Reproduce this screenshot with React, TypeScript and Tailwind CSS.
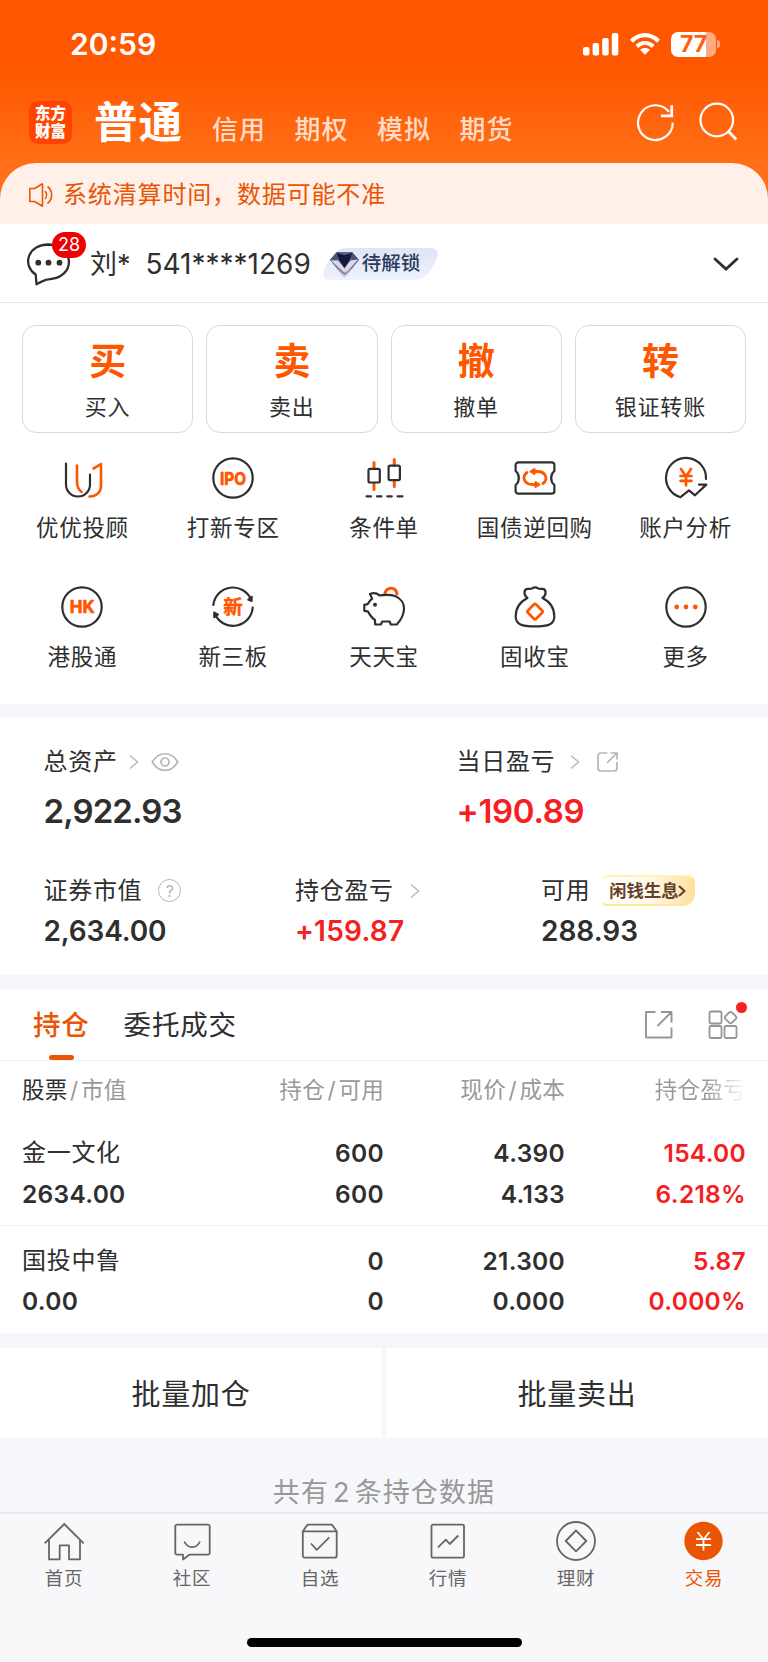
import type { ReactNode } from 'react';
import clsx from 'clsx';

const DARK = '#2f2f2f';
const ORANGE = '#ff5600';

const headerTabs = ['信用', '期权', '模拟', '期货'];

const actions = [
  { mark: '买', label: '买入' },
  { mark: '卖', label: '卖出' },
  { mark: '撤', label: '撤单' },
  { mark: '转', label: '银证转账' },
];

const holdings = [
  { name: '金一文化', value: '2634.00', qty: '600', usable: '600', price: '4.390', cost: '4.133', profit: '154.00', rate: '6.218%' },
  { name: '国投中鲁', value: '0.00', qty: '0', usable: '0', price: '21.300', cost: '0.000', profit: '5.87', rate: '0.000%' },
];

function ServiceIcon({ children }: { children: ReactNode }) {
  return (
    <svg
      className="h-11 w-11 overflow-visible"
      viewBox="0 0 44 44"
      fill="none"
      stroke={DARK}
      strokeWidth="2.2"
      strokeLinecap="round"
      strokeLinejoin="round"
    >
      {children}
    </svg>
  );
}

const services: { label: string; icon: ReactNode }[] = [
  {
    label: '优优投顾',
    icon: (
      <>
        <path d="M6 7.5V28.5a12 12 0 0 0 24 0V18.5" />
        <path d="M17 9.5V26c0 4.500 1.200 7.500 4.500 10" stroke={ORANGE} strokeWidth="2.600" />
        <path d="M33.500 12.500 41 8.200V29.500C41 36.500 36 40.500 29.500 40.500" stroke={ORANGE} strokeWidth="2.600" />
      </>
    ),
  },
  {
    label: '打新专区',
    icon: (
      <>
        <circle cx="22" cy="22" r="19.7" />
        <text x="22" y="28.500" textAnchor="middle" fontSize="17.500" fontWeight="700" fill={ORANGE} stroke={ORANGE} strokeWidth="0.7" textLength="26" lengthAdjust="spacingAndGlyphs" fontFamily="Inter, sans-serif">
          IPO
        </text>
      </>
    ),
  },
  {
    label: '条件单',
    icon: (
      <>
        <path d="M12 6.500v6M12 27.500v6M32.300 3.500v6M32.300 24.500v6" stroke={ORANGE} strokeWidth="3" />
        <rect x="6.500" y="12.800" width="11.300" height="13.700" rx="1.500" />
        <rect x="26.600" y="9.600" width="11.300" height="14.500" rx="1.500" />
        <path d="M4.500 40.300h4.500M15 40.300h4.500M25.300 40.300h4.500M35.500 40.300h5" />
      </>
    ),
  },
  {
    label: '国债逆回购',
    icon: (
      <>
        <path d="M5.300 6.400H38.700a2.700 2.700 0 0 1 2.700 2.700V15c-4.300 3.300-4.300 10.700 0 14v6a2.700 2.700 0 0 1-2.700 2.700H5.300A2.700 2.700 0 0 1 2.600 35v-6c4.300-3.300 4.300-10.700 0-14V9.100a2.700 2.700 0 0 1 2.700-2.700Z" />
        <g stroke={ORANGE} strokeWidth="2.800">
          <path d="M21 15.500h3.500c8.500 0 11 8 5.500 12" />
          <path d="M23 28.500h-3.500c-8.500 0-11-8-5.500-12" />
          <path d="m21.500 13-4 2.500 4 2.500ZM22.500 26l4 2.500-4 2.500Z" fill={ORANGE} strokeWidth="2" />
        </g>
      </>
    ),
  },
  {
    label: '账户分析',
    icon: (
      <>
        <path d="M42 23A20 20 0 1 0 16.500 41.200L25 34.300 31 39.300 42.300 28.600H35" />
        <path d="m17 13 5 7.500 5-7.500M22 20.500V29.500M16.500 20h11M16.500 24.800h11" stroke={ORANGE} strokeWidth="2.700" />
      </>
    ),
  },
  {
    label: '港股通',
    icon: (
      <>
        <circle cx="22" cy="22" r="19.7" />
        <text x="22.300" y="28.300" textAnchor="middle" fontSize="17.500" fontWeight="700" fill={ORANGE} stroke={ORANGE} strokeWidth="0.7" textLength="25" lengthAdjust="spacingAndGlyphs" fontFamily="Inter, sans-serif">
          HK
        </text>
      </>
    ),
  },
  {
    label: '新三板',
    icon: (
      <>
        <path d="M2.300 20A19.700 19.700 0 0 1 40 14.500M41.700 22.500A19.700 19.700 0 0 1 4.200 29.500" />
        <path d="m41 11.500-.2 4.800-3.800-1.600ZM3 32.500V27.300l4.200 2.200Z" fill={DARK} strokeWidth="1.600" />
        <text x="22" y="29" textAnchor="middle" fontSize="19.500" fontWeight="700" fill={ORANGE} stroke={ORANGE} strokeWidth="0.4" fontFamily="'Noto Sans CJK SC', sans-serif">
          新
        </text>
      </>
    ),
  },
  {
    label: '天天宝',
    icon: (
      <>
        <path d="M22.800 8.500c2.200-7.300 11-7 12.200.5" stroke={ORANGE} strokeWidth="2.900" />
        <path d="M8 9c3-1.200 7-.7 9.500 1.300 5-.6 11-.8 15.500.7 6.500 2.500 9.300 8 9 13.300-.3 5.700-3 10.700-7.200 15.200h-6l-1.200-3h-7.300l-1.500 3h-5.600l-.3-4.600C9.500 33 8 30 5.800 26.300l-3.500-.5V19.800l3.300-.6C7 17 8.200 15 10.200 13.600Z" />
        <circle cx="13" cy="19.800" r="1.300" fill={DARK} strokeWidth="1.400" />
      </>
    ),
  },
  {
    label: '固收宝',
    icon: (
      <>
        <path d="M14.500 13c-4.200-3.200-4-9.200.5-9.200 2 0 2.600.3 3.800-.2 2.300-1.500 4.400-1.500 6.500 0 1.200.5 1.900.2 3.800.2 4.500 0 4.700 6 .4 9.200C36.500 16.500 41.300 23 41.300 31.500c0 8-6.300 9.800-19.300 9.800S2.700 39.500 2.700 31.500C2.700 23 7.500 16.500 14.500 13Z" />
        <rect x="16.200" y="20.800" width="11.600" height="11.600" rx="1.600" transform="rotate(45 22 26.600)" stroke={ORANGE} strokeWidth="2.700" />
      </>
    ),
  },
  {
    label: '更多',
    icon: (
      <>
        <circle cx="22" cy="22" r="19.7" />
        <g fill={ORANGE} stroke="none">
          <circle cx="12.700" cy="22" r="2.400" />
          <circle cx="22" cy="22" r="2.400" />
          <circle cx="31.300" cy="22" r="2.400" />
        </g>
      </>
    ),
  },
];

const navItems: { label: string; active?: boolean; icon: ReactNode }[] = [
  { label: '首页', icon: <path d="M1.700 23.300 21.300 4l19.400 19.300M6 19.500V39.300H16.700V25.300H26V39.300H37V19.500" /> },
  {
    label: '社区',
    icon: (
      <>
        <path d="M6 4.700H37a1.700 1.700 0 0 1 1.700 1.700V33a1.700 1.700 0 0 1-1.700 1.700H18.300L12 39.500V34.700H6A1.700 1.700 0 0 1 4.300 33V6.400A1.700 1.700 0 0 1 6 4.700Z" />
        <path d="M13.300 21.500c3.200 7.400 12.500 7.400 15.700 0" />
      </>
    ),
  },
  {
    label: '自选',
    icon: (
      <>
        <path d="M8.500 4.700H33L37.700 11.300V35.500a2.200 2.200 0 0 1-2.200 2.200H6a2.200 2.200 0 0 1-2.200-2.200V11.300ZM3.800 11.300H37.700" />
        <path d="m12 23.500 5.800 6.300L30.300 17.300" />
      </>
    ),
  },
  {
    label: '行情',
    icon: (
      <>
        <rect x="4.500" y="4.700" width="32.500" height="33" rx="1.500" />
        <path d="m11 27.300 7.800-7.600 3.900 4.300 8.600-8.500" />
      </>
    ),
  },
  {
    label: '理财',
    icon: (
      <>
        <circle cx="21" cy="21" r="19" />
        <path d="M21 10.500 31.300 21 21 31.300 10.700 21Z" />
      </>
    ),
  },
  {
    label: '交易',
    active: true,
    icon: (
      <>
        <circle cx="20.500" cy="21" r="19.200" fill="#ea5504" stroke="none" />
        <path d="m14.500 12 6 7.500 6-7.500M20.500 19.500V30.500M13 19.200h15M13 25h15" stroke="#fff" />
      </>
    ),
  },
];

function StatusBar() {
  return (
    <div className="flex h-[87px] items-center justify-between pl-[70px] pr-12 pt-px">
      <span className="text-[30px] font-semibold text-white">20:59</span>
      <div className="flex items-center gap-2.5 text-white">
        <svg className="h-6 w-9" viewBox="0 0 36 24" fill="currentColor">
          <rect x="0" y="15" width="6.500" height="8.500" rx="2" />
          <rect x="9.600" y="11" width="6.500" height="12.500" rx="2" />
          <rect x="19.200" y="6" width="6.500" height="17.500" rx="2" />
          <rect x="28.800" y="1" width="6.500" height="22.500" rx="2" />
        </svg>
        <svg className="h-6 w-8" viewBox="0 0 32 24" fill="none" stroke="currentColor" strokeWidth="4.200">
          <path d="M2.500 9.200c8-8 19-8 27 0M7.800 14.500c5-4.700 11.400-4.700 16.400 0" />
          <path d="M16 22.700 11 17.700c3-2.400 7-2.400 10 0Z" fill="currentColor" stroke="none" />
        </svg>
        <div className="flex items-center gap-px">
          <div className="flex h-[25px] w-[45px] items-center justify-center rounded-[7px] bg-[linear-gradient(90deg,#fff_78%,#ffab80_78%)] text-[23px] font-bold leading-none text-[#ff6010]">
            77
          </div>
          <div className="h-2 w-[3px] rounded-r-full bg-[#ffab80]" />
        </div>
      </div>
    </div>
  );
}

function AppHeader() {
  return (
    <div className="flex h-[76px] items-end pl-[29px] pr-[31px]">
      <div className="mb-[19px] flex h-[43px] w-[43px] flex-col items-center justify-center rounded-[9px] bg-[#ff4400] text-[15.5px] font-black leading-[18px] text-white">
        <span>东方</span>
        <span>财富</span>
      </div>
      <span className="ml-[22px] mb-[18px] text-[43.500px] font-bold leading-[46px] tracking-[1px] text-white">普通</span>
      <div className="mb-[19px] ml-[29px] flex gap-[28.500px] text-[26px] font-medium leading-7 tracking-[1px] text-[#ffdcc8]">
        {headerTabs.map((tab) => (
          <span key={tab}>{tab}</span>
        ))}
      </div>
      <svg className="mb-[21px] ml-auto h-10 w-10" viewBox="0 0 40 40" fill="none" stroke="#fff" strokeWidth="2.200">
        <path d="M37.800 20.800A17.400 17.400 0 1 1 34 9.800" />
        <path d="M26 13.900H36.700V3.300" strokeWidth="2.800" />
      </svg>
      <svg className="mb-[21px] ml-[22px] h-10 w-10" viewBox="0 0 40 40" fill="none" stroke="#fff" strokeWidth="2.200">
        <circle cx="19.800" cy="18" r="16.300" />
        <path d="m31 29 8.300 8.500" strokeWidth="2.700" />
      </svg>
    </div>
  );
}

function AccountRow() {
  return (
    <div className="flex h-[79px] items-center border-b border-[#e9e9e9] pl-[26px] pr-[29px] pt-px text-[#2f2f2f]">
      <div className="relative h-[46px] w-[46px]">
        <svg className="h-[46px] w-[46px]" viewBox="0 0 46 46" fill="none" stroke={DARK} strokeWidth="2.300" strokeLinejoin="round">
          <path d="M10.500 43.200 9.700 33.500C-3.500 25 .5 4 22.500 3.500 49.500 4.500 50 37 22.500 38.300 19.500 38.300 10.500 43.200 10.500 43.200Z" />
          <g fill={DARK} stroke="none">
            <circle cx="12.300" cy="21.700" r="2.900" />
            <circle cx="22.500" cy="21.700" r="2.900" />
            <circle cx="33.500" cy="21.700" r="2.900" />
          </g>
        </svg>
        <span className="absolute left-[26px] -top-[9px] flex h-[26px] w-[34px] items-center justify-center rounded-full bg-[#ee0000] text-[18px] text-white">
          28
        </span>
      </div>
      <span className="ml-[18px] pt-px text-[27px] leading-none">刘*</span>
      <span className="ml-[15px] pt-px text-[28px] leading-none">541****1269</span>
      <div className="relative ml-[12px] flex h-8 w-[115px] items-center">
        <svg className="absolute inset-0 h-8 w-[115px]" viewBox="0 0 115 32">
          <defs>
            <linearGradient id="vip" x1="0" y1="0" x2="0" y2="1">
              <stop offset="0" stopColor="#dfe5f5" />
              <stop offset="1" stopColor="#eef2fe" />
            </linearGradient>
            <linearGradient id="gem" x1="0" y1="0" x2="0" y2="1">
              <stop offset="0" stopColor="#5d668c" />
              <stop offset="0.600" stopColor="#77739b" />
              <stop offset="1" stopColor="#d9dcea" />
            </linearGradient>
          </defs>
          <path d="M23 0h84c7 0 9 5 7 10-4 9-10 22-23 22H7c-6 0-8-5-6-10C5 12 12 0 23 0Z" fill="url(#vip)" />
          <path d="m7 12 7-8h15l7 8-14.500 18Z" fill="url(#gem)" />
          <path d="m7 12 7-8 3 2-3 6ZM36 12l-7-8-3 2 3 6Z" fill="#4a5274" />
          <path d="m14 5 7.500 2L29 5l-2 7-5.500 8-5.500-8Z" fill="#111a3c" />
          <path d="M8 12.500h7l6.500 8 6-8 7.500-1-13.500 15Z" fill="#dcdae2" />
          <path d="m8 12.500 13.500 14L25 22.500 21.500 25Z" fill="#67608a" />
        </svg>
        <span className="relative ml-[39px] text-[19.500px] font-medium leading-none text-[#2c3a5c]">待解锁</span>
      </div>
      <svg className="ml-auto h-4 w-[26px]" viewBox="0 0 26 16" fill="none" stroke={DARK} strokeWidth="2.800" strokeLinecap="round">
        <path d="m2 3 11 10L24 3" />
      </svg>
    </div>
  );
}

function Chevron() {
  return (
    <svg className="h-4 w-2.5" viewBox="0 0 10 16" fill="none" stroke="#bdbdbd" strokeWidth="1.600">
      <path d="m1 1.500 7.500 6.500L1 14.500" />
    </svg>
  );
}

function Assets() {
  return (
    <section className="h-[257px] bg-white pl-[43.500px] text-[#2f2f2f]">
      <div className="flex pt-7">
        <div className="w-[413px]">
          <div className="flex h-8 items-center text-[24px] tracking-[0.700px]">
            总资产
            <span className="ml-[11px] flex"><Chevron /></span>
            <svg className="ml-3 h-5 w-7" viewBox="0 0 28 20" fill="none" stroke="#b5b5b5" strokeWidth="1.700">
              <path d="M1.300 10C7.500-1 20.500-1 26.700 10 20.500 21 7.500 21 1.300 10Z" />
              <circle cx="14" cy="10" r="4" />
            </svg>
          </div>
          <div className="mt-[15px] text-[33px] font-semibold leading-9 tracking-[-0.900px]">2,922.93</div>
        </div>
        <div>
          <div className="flex h-8 items-center text-[24px] tracking-[0.700px]">
            当日盈亏
            <span className="ml-[15px] flex"><Chevron /></span>
            <svg className="ml-[17px] h-[22px] w-[22px]" viewBox="0 0 22 22" fill="none" stroke="#b5b5b5" strokeWidth="1.700">
              <path d="M10.500 2H4a3 3 0 0 0-3 3V17a3 3 0 0 0 3 3H17a3 3 0 0 0 3-3V11M13.500 2H20V8.500M20 2 10 12" />
            </svg>
          </div>
          <div className="mt-[15px] text-[33px] font-semibold leading-9 tracking-[-0.300px] text-[#f52020]">+190.89</div>
        </div>
      </div>
      <div className="mt-[45.500px] flex">
        <div className="w-[251.500px]">
          <div className="flex h-8 items-center text-[24px] tracking-[0.700px]">
            证券市值
            <span className="ml-4 flex h-[23px] w-[23px] items-center justify-center rounded-full border-[1.500px] border-[#b5b5b5] text-[16px] tracking-normal text-[#b5b5b5]">
              ?
            </span>
          </div>
          <div className="mt-2 text-[28px] font-semibold leading-8 tracking-[-0.150px]">2,634.00</div>
        </div>
        <div className="w-[246px]">
          <div className="flex h-8 items-center text-[24px] tracking-[0.700px]">
            持仓盈亏
            <span className="ml-4 flex"><Chevron /></span>
          </div>
          <div className="mt-2 text-[28px] font-semibold leading-8 tracking-[0.250px] text-[#f52020]">+159.87</div>
        </div>
        <div>
          <div className="flex h-8 items-center text-[24px] tracking-[0.700px]">
            可用
            <span className="ml-[10px] flex h-[31px] w-[95px] items-center justify-center rounded-[9px_7px_12px_7px] border-2 border-t-[#fff3b0] border-r-[#ffe09a] border-b-[#ffe79a] border-l-transparent bg-gradient-to-r from-white via-[#fffaee] to-[#ffdf9e] bg-origin-border text-[17.300px] font-bold tracking-normal text-[#65402a]">
              闲钱生息
              <svg className="h-3 w-2" viewBox="0 0 8 12" fill="none" stroke="#65402a" strokeWidth="2.200">
                <path d="m1 1 5.500 5L1 11" />
              </svg>
            </span>
          </div>
          <div className="mt-2 text-[28px] font-semibold leading-8">288.93</div>
        </div>
      </div>
    </section>
  );
}

function HoldingTabs() {
  return (
    <div className="flex h-[72px] items-center border-b border-[#f0f0f0] pl-[33px] pr-[30px] text-[27.500px] tracking-[0.800px]">
      <div className="relative flex h-full items-center pt-0.5 font-medium text-[#ea5504]">
        持仓
        <span className="absolute bottom-0 left-4 h-[5px] w-[25px] rounded-full bg-[#ea5504]" />
      </div>
      <span className="ml-[34px] pt-0.5 text-[#2f2f2f]">委托成交</span>
      <svg className="ml-auto h-[30px] w-[30px]" viewBox="0 0 30 30" fill="none" stroke="#969696" strokeWidth="1.900" strokeLinejoin="round">
        <path d="M11.500 2H2V27.500H27.500V17.500M17 2H27.500V12.500M27.500 2 13.500 16" />
      </svg>
      <div className="relative ml-[34px] h-[30px] w-[30px]">
        <svg className="h-[30px] w-[30px]" viewBox="0 0 30 30" fill="none" stroke="#969696" strokeWidth="1.800">
          <rect x="1.500" y="1.500" width="12" height="12" rx="1.500" />
          <rect x="1.500" y="16" width="12" height="12" rx="1.500" />
          <rect x="16.500" y="16" width="12" height="12" rx="1.500" />
          <rect x="18" y="3" width="9.200" height="9.200" rx="2" transform="rotate(45 22.600 7.600)" />
        </svg>
        <span className="absolute -right-[9px] -top-[8px] h-[11px] w-[11px] rounded-full bg-[#f52020]" />
      </div>
    </div>
  );
}

function Holdings() {
  return (
    <section className="bg-white px-[22px] text-[#2f2f2f]">
      <div className="grid h-[61px] grid-cols-[182px_180px_181px_181px] items-center pb-1 text-right text-[22.500px] tracking-[0.300px] text-[#999]">
        <div className="text-left">
          <span className="text-[#2f2f2f]">股票</span>
          <span className="mx-[2.500px]">/</span>市值
        </div>
        <div>持仓<span className="mx-[2.500px]">/</span>可用</div>
        <div>现价<span className="mx-[2.500px]">/</span>成本</div>
        <div className="bg-[linear-gradient(90deg,#999_78%,#fff_100%)] bg-clip-text text-transparent">持仓盈亏</div>
      </div>
      {holdings.map((row, i) => (
        <div
          key={row.name}
          className={clsx(
            '-mx-[22px] grid grid-cols-[182px_180px_181px_181px] px-[22px] text-right text-[24.500px] font-semibold leading-[40.500px] tracking-[0.300px]',
            i === 0 ? 'h-[104px] border-b border-[#f0f0f0] pt-[11px]' : 'h-[107px] pt-[14.500px]',
          )}
        >
          <div className="text-left">
            <div className="text-[24px] font-normal tracking-[0.700px]">{row.name}</div>
            <div>{row.value}</div>
          </div>
          <div>
            <div>{row.qty}</div>
            <div>{row.usable}</div>
          </div>
          <div>
            <div>{row.price}</div>
            <div>{row.cost}</div>
          </div>
          <div className="text-[#f52020]">
            <div>{row.profit}</div>
            <div>{row.rate}</div>
          </div>
        </div>
      ))}
    </section>
  );
}

function BottomNav() {
  return (
    <nav className="flex h-[150px] flex-col border-t-2 border-[#ebebed] bg-[#f8f8fb]">
      <div className="flex pt-[6px]">
        {navItems.map((item) => (
          <div key={item.label} className={clsx('flex w-32 flex-col items-center', item.active ? 'text-[#ea5504]' : 'text-[#666]')}>
            <svg className="h-[42px] w-[42px]" viewBox="0 0 42 42" fill="none" stroke="currentColor" strokeWidth="1.800" strokeLinejoin="round">
              {item.icon}
            </svg>
            <span className="mt-1 text-[18.500px] leading-6 tracking-[0.700px]">{item.label}</span>
          </div>
        ))}
      </div>
      <div className="mx-auto mt-auto mb-[15px] h-[9px] w-[275px] rounded-full bg-black" />
    </nav>
  );
}

export default function App() {
  return (
    <div className="flex h-[1662px] w-[768px] flex-col overflow-hidden bg-[#f6f7fa] font-['Inter','Noto_Sans_CJK_SC',sans-serif]">
      <header className="bg-[linear-gradient(180deg,#ff5600_0px,#ff5600_65px,#ff7018_165px,#ff7018_100%)]">
        <StatusBar />
        <AppHeader />
        <div className="flex h-[61px] items-center rounded-t-[36px] bg-[#fff1ea] pl-7 pt-0.5 text-[24px] tracking-[0.850px] text-[#ea5504]">
          <svg className="mr-[9px] h-[26px] w-[26px]" viewBox="0 0 26 26" fill="none" stroke="currentColor" strokeWidth="1.600" strokeLinejoin="round">
            <path d="M1.800 6.500H6.500L14.500 1.800V24.200L6.500 19.500H1.800Z" />
            <path d="M17 9c2 2.300 2 5.700 0 8M19.500 4.500c5.500 4.300 5.500 12.700 0 17" />
          </svg>
          系统清算时间，数据可能不准
        </div>
      </header>

      <section className="h-[480px] shrink-0 bg-white">
        <AccountRow />
        <div className="flex gap-[13px] px-[22px] pt-[22px]">
          {actions.map((action) => (
            <div key={action.label} className="flex h-[108px] flex-1 flex-col items-center rounded-[14px] border border-[#d9d9d9]">
              <span className="mt-[15px] text-[37px] font-bold leading-[42px] text-[#ff5600]">{action.mark}</span>
              <span className="mt-2 text-[22px] leading-8 tracking-[0.800px] text-[#2f2f2f]">{action.label}</span>
            </div>
          ))}
        </div>
        <div className="grid grid-cols-5 gap-y-[31px] px-[7px] pt-[22.500px]">
          {services.map((service) => (
            <div key={service.label} className="flex h-[98px] flex-col items-center">
              <ServiceIcon>{service.icon}</ServiceIcon>
              <span className="mt-3 text-[22.500px] leading-8 tracking-[0.700px] text-[#2f2f2f]">{service.label}</span>
            </div>
          ))}
        </div>
      </section>

      <div className="mt-[14px]">
        <Assets />
      </div>

      <div className="mt-[14px] bg-white">
        <HoldingTabs />
        <Holdings />
      </div>

      <div className="mt-[15px] flex gap-1 text-[29px] tracking-[0.800px] text-[#2f2f2f]">
        <div className="flex h-[90px] flex-1 items-center justify-center bg-white pt-[3px]">批量加仓</div>
        <div className="flex h-[90px] flex-1 items-center justify-center bg-white pt-[3px]">批量卖出</div>
      </div>

      <div className="flex flex-1 items-end justify-center text-[27px] leading-[38px] tracking-[1.100px] text-[#999]">
        共有<span className="mx-1">2</span>条持仓数据
      </div>

      <BottomNav />
    </div>
  );
}
